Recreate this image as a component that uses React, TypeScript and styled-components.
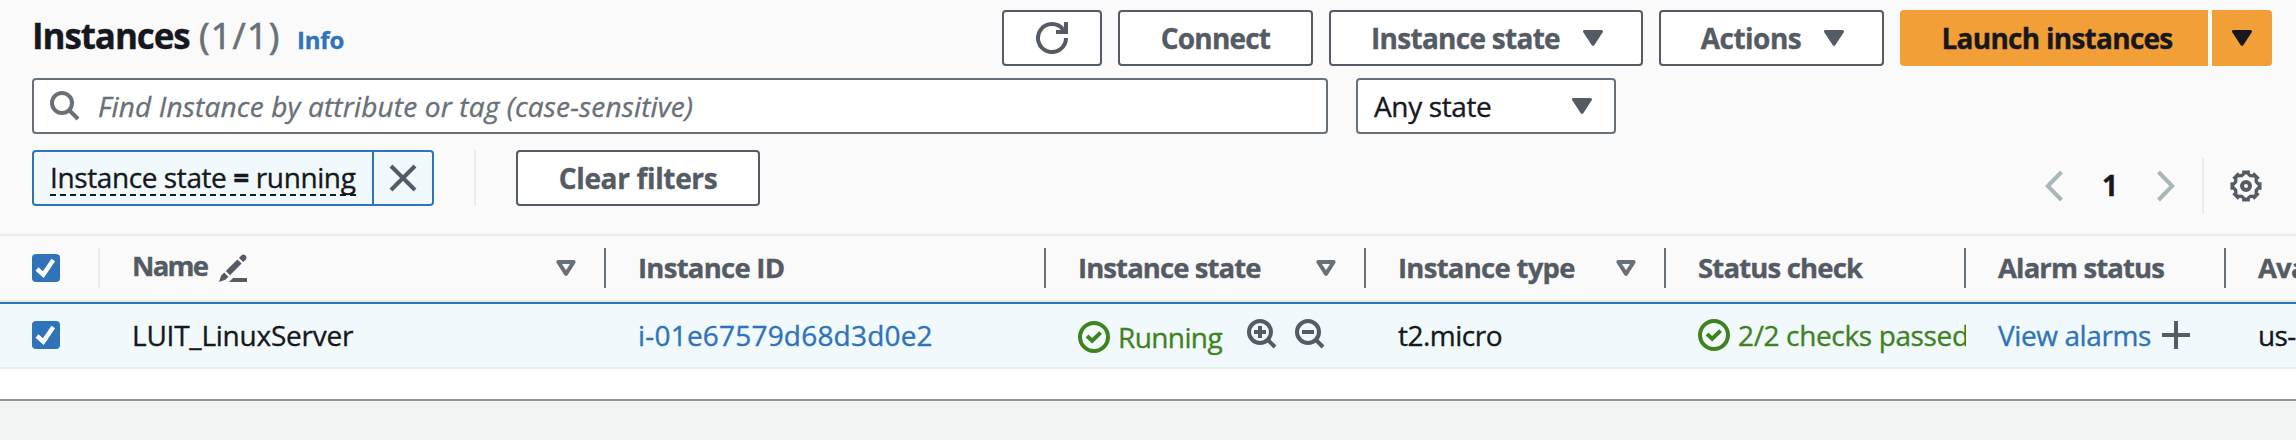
import React from 'react';
import styled, { createGlobalStyle, ThemeProvider } from 'styled-components';

const theme = {
  blue: '#2f73b9',
  orange: '#f29f38',
  green: '#3f831e',
  ink: '#16181e',
  slate: '#545b64',
  grey: '#687078',
  line: '#eaeded',
  header: '#fafafa',
  selected: '#f1f9fd',
};

const GlobalStyle = createGlobalStyle`
  * { box-sizing: border-box; }
  body {
    margin: 0;
    background: #f2f3f3;
    font-family: 'Open Sans', 'Noto Sans', sans-serif;
    font-size: 28px;
    line-height: 36px;
    color: ${theme.ink};
    -webkit-text-stroke: 0.35px currentColor;
  }
  svg { display: block; flex: none; }
`;

const Panel = styled.main`
  width: 2296px;
  height: 401px;
  background: #fff;
  border-bottom: 2px solid #90979b;
  box-shadow: 0 1px 0 #d3d6d7;
`;

const PanelHeader = styled.header`
  height: 236px;
  padding: 10px 24px 0 32px;
  background: ${theme.header};
  border-bottom: 2px solid ${theme.line};
`;

const TitleBar = styled.div`
  display: flex;
  justify-content: space-between;
  height: 56px;
`;

const Heading = styled.div`
  display: flex;
  align-items: baseline;
  white-space: nowrap;
  padding-top: 4px;
`;

const Title = styled.h1`
  margin: 0;
  width: 167px;
  font-size: 35px;
  line-height: 44px;
  font-weight: 700;
  letter-spacing: -1.08px;
`;

const Count = styled.span`
  width: 98px;
  font-size: 36px;
  letter-spacing: 1.2px;
  color: ${theme.grey};
  -webkit-text-stroke: 0.7px currentColor;
`;

const InfoLink = styled.a`
  font-size: 24px;
  font-weight: 700;
  letter-spacing: -0.2px;
  color: ${theme.blue};
`;

const Actions = styled.div`
  display: flex;
  gap: 16px;
`;

const Button = styled.button<{ $width: number; $spacing?: number; $gap?: number }>`
  display: flex;
  align-items: center;
  justify-content: center;
  gap: ${(p) => p.$gap ?? 0}px;
  width: ${(p) => p.$width}px;
  height: 56px;
  padding: 0 0 1px;
  border: 2px solid ${theme.slate};
  border-radius: 4px;
  background: #fff;
  color: ${theme.slate};
  font: 700 28px/36px 'Open Sans', sans-serif;
  letter-spacing: ${(p) => p.$spacing ?? 0}px;
  white-space: nowrap;
`;

const MenuButton = styled(Button)`
  padding-left: 2px;
`;

const SplitButton = styled.div`
  display: flex;
  gap: 4px;
`;

const PrimaryButton = styled(Button)<{ $side: 'left' | 'right' }>`
  padding-left: ${(p) => (p.$side === 'left' ? 6 : 0)}px;
  border-color: ${theme.orange};
  border-radius: ${(p) => (p.$side === 'left' ? '4px 0 0 4px' : '0 4px 4px 0')};
  background: ${theme.orange};
  color: ${theme.ink};
`;

const SearchRow = styled.div`
  display: flex;
  gap: 28px;
  margin-top: 12px;
`;

const SearchBox = styled.div`
  display: flex;
  align-items: center;
  gap: 18px;
  width: 1296px;
  height: 56px;
  padding-left: 16px;
  border: 2px solid ${theme.grey};
  border-radius: 4px;
  background: #fff;
  color: ${theme.grey};
`;

const Placeholder = styled.span`
  font-style: italic;
  letter-spacing: 0.16px;
`;

const Select = styled(SearchBox)`
  justify-content: space-between;
  width: 260px;
  padding: 0 22px 0 16px;
  color: ${theme.ink};
  letter-spacing: -0.37px;
  & > svg { color: ${theme.slate}; }
`;

const FilterRow = styled.div`
  display: flex;
  margin-top: 16px;
`;

const Token = styled.div`
  display: flex;
  width: 402px;
  height: 56px;
  border: 2px solid ${theme.blue};
  border-radius: 4px;
  background: ${theme.selected};
`;

const TokenLabel = styled.div`
  width: 338px;
  padding: 9px 0 0 16px;
`;

const TokenText = styled.span`
  display: block;
  width: 306px;
  height: 35px;
  border-bottom: 2px dashed ${theme.ink};
  line-height: 33px;
  letter-spacing: -0.4px;
  white-space: nowrap;
`;

const TokenDismiss = styled.div`
  display: flex;
  flex: 1;
  align-items: center;
  justify-content: center;
  border-left: 2px solid ${theme.blue};
  color: ${theme.slate};
`;

const FilterDivider = styled.i`
  width: 2px;
  height: 56px;
  margin: 0 40px;
  background: ${theme.line};
`;

const Pagination = styled.nav`
  display: flex;
  align-items: center;
  height: 56px;
  margin: 8px 10px 0 auto;
  color: #aab7b8;
`;

const PageNumber = styled.b`
  width: 94px;
  padding-bottom: 2px;
  text-align: center;
  color: ${theme.ink};
`;

const PagerDivider = styled.i`
  width: 2px;
  height: 56px;
  margin: 0 26px 0 27px;
  background: ${theme.line};
`;

const Row = styled.div`
  display: grid;
  grid-template-columns: 100px 506px 440px 320px 300px 300px 260px 320px;
  width: 2296px;
  overflow: hidden;
  white-space: nowrap;
`;

const HeadRow = styled(Row)`
  height: 66px;
  background: ${theme.header};
  border-bottom: 2px solid ${theme.line};
`;

const HeadCell = styled.div<{ $spacing?: number; $light?: boolean }>`
  display: flex;
  align-items: center;
  align-self: center;
  height: 40px;
  padding: 0 28px 1px 32px;
  border-right: 2px solid ${(p) => (p.$light ? theme.line : theme.grey)};
  font-weight: 700;
  font-size: 27.5px;
  letter-spacing: ${(p) => p.$spacing ?? 0}px;
  color: ${theme.slate};
  & > svg:last-child { margin-left: auto; }
`;

const NameLabel = styled.span`
  display: flex;
  align-items: center;
  gap: 12px;
  padding-bottom: 3px;
  & > svg { margin-top: 4px; }
`;

const BodyRow = styled(Row)`
  height: 67px;
  border-top: 2px solid ${theme.blue};
  border-bottom: 2px solid ${theme.line};
  background: ${theme.selected};
`;

const Cell = styled.div<{ $spacing?: number }>`
  display: flex;
  align-items: center;
  height: 61px;
  padding-left: 32px;
  overflow: hidden;
  letter-spacing: ${(p) => p.$spacing ?? 0}px;
`;

const Status = styled.span<{ $lowered?: boolean }>`
  display: flex;
  align-items: center;
  gap: 8px;
  padding-top: ${(p) => (p.$lowered ? 4 : 0)}px;
  color: ${theme.green};
`;

const ZoomActions = styled.span`
  display: flex;
  gap: 18px;
  margin: 0 0 2px 25px;
  color: ${theme.slate};
`;

const Link = styled.a`
  color: ${theme.blue};
`;

const AddAlarm = styled.span`
  margin: 0 0 0 11px;
  color: ${theme.slate};
`;

const CheckTile = styled.span`
  width: 28px;
  height: 28px;
  border-radius: 4px;
  background: ${theme.blue};
`;

const SelectHead = styled(HeadCell)`
  padding: 0 0 0 32px;
`;

const Checkbox = () => (
  <CheckTile>
    <svg width="28" height="28" fill="none" stroke="#fff" strokeWidth="4.4">
      <path d="M5 15 11.3 20.6 21.3 6" />
    </svg>
  </CheckTile>
);

const Caret = () => (
  <svg width="20" height="16" fill="currentColor" stroke="currentColor" strokeWidth="3" strokeLinejoin="round">
    <path d="M1.5 1.5h17L10 14.3z" />
  </svg>
);

const SortIcon = () => (
  <svg width="20" height="16" fill="none" stroke={theme.grey} strokeWidth="4" strokeLinejoin="round">
    <path d="M2.4 2h15.2L10 13.8z" />
  </svg>
);

const RefreshIcon = () => (
  <svg width="32" height="32" fill="none" stroke="currentColor" strokeWidth="4">
    <path d="M30 16A14 14 0 1 1 27.2 7.6L29 10" />
    <path d="M20 10h10V0" />
  </svg>
);

const SearchIcon = ({ sign }: { sign?: 'plus' | 'minus' }) => (
  <svg width="30" height="30" fill="none" stroke="currentColor" strokeWidth="4">
    <circle cx={sign ? 13 : 12} cy={sign ? 13 : 12} r={sign ? 11 : 10} />
    <path d={sign ? 'M20.5 20.5 28 28' : 'M19 19 28 28'} />
    {sign && <path d="M7 13h12" />}
    {sign === 'plus' && <path d="M13 7v12" />}
  </svg>
);

const CloseIcon = () => (
  <svg width="28" height="28" fill="none" stroke="currentColor" strokeWidth="4">
    <path d="M2 2 26 26M26 2 2 26" />
  </svg>
);

const Chevron = ({ forward }: { forward?: boolean }) => (
  <svg width="18" height="32" fill="none" stroke="currentColor" strokeWidth="4">
    <path d={forward ? 'M1.5 2 15.2 16 1.5 30' : 'M16.5 2 2.8 16 16.5 30'} />
  </svg>
);

const polar = (r: number, deg: number) =>
  `${(16 + r * Math.sin((deg * Math.PI) / 180)).toFixed(2)} ${(16 - r * Math.cos((deg * Math.PI) / 180)).toFixed(2)}`;

const gearTeeth = Array.from({ length: 8 }, (_, i) => {
  const a = i * 45;
  return [polar(13.2, a - 17), polar(16, a - 14), polar(16, a + 14), polar(13.2, a + 17)].join('L');
}).join('L');

const gearInside = Array.from({ length: 8 }, (_, i) => `${polar(12, i * 45)}L${polar(9.4, i * 45 + 22.5)}`).join('L');

const GearIcon = () => (
  <svg width="32" height="32">
    <path d={`M${gearTeeth}ZM${gearInside}Z`} fill={theme.slate} fillRule="evenodd" />
    <circle cx="16" cy="16" r="4" fill="none" stroke={theme.slate} strokeWidth="4" />
  </svg>
);

const EditIcon = () => (
  <svg width="28" height="28" fill="currentColor">
    <path d="M0 28 2.2 21.5 5.2 18.6 9.4 22.8 6.5 25.8zM6.8 17 18.4 5.4 22.6 9.6 11 21.2zM20 3.8 22.6 1.2a3 3 0 0 1 4.2 4.2L24.2 8z" />
    <path d="M14 24h14v4H10z" />
  </svg>
);

const CheckCircle = () => (
  <svg width="32" height="32" fill="none" stroke="currentColor" strokeWidth="4">
    <circle cx="16" cy="16" r="14" />
    <path d="M9 15 14.2 19.8 22.6 11.6" />
  </svg>
);

const PlusIcon = () => (
  <svg width="28" height="28" fill="none" stroke="currentColor" strokeWidth="4">
    <path d="M14 0v28M0 14h28" />
  </svg>
);

export default function App() {
  return (
    <ThemeProvider theme={theme}>
      <GlobalStyle />
      <Panel>
        <PanelHeader>
          <TitleBar>
            <Heading>
              <Title>Instances</Title>
              <Count>(1/1)</Count>
              <InfoLink>Info</InfoLink>
            </Heading>
            <Actions>
              <Button $width={100}><RefreshIcon /></Button>
              <Button $width={195} $spacing={-0.8}>Connect</Button>
              <MenuButton $width={314} $spacing={-0.72} $gap={23}>Instance state <Caret /></MenuButton>
              <MenuButton $width={225} $spacing={-0.53} $gap={23}>Actions <Caret /></MenuButton>
              <SplitButton>
                <PrimaryButton $width={308} $spacing={-0.73} $side="left">Launch instances</PrimaryButton>
                <PrimaryButton $width={60} $side="right"><Caret /></PrimaryButton>
              </SplitButton>
            </Actions>
          </TitleBar>
          <SearchRow>
            <SearchBox>
              <SearchIcon />
              <Placeholder>Find Instance by attribute or tag (case-sensitive)</Placeholder>
            </SearchBox>
            <Select>Any state <Caret /></Select>
          </SearchRow>
          <FilterRow>
            <Token>
              <TokenLabel><TokenText>Instance state <b>=</b> running</TokenText></TokenLabel>
              <TokenDismiss><CloseIcon /></TokenDismiss>
            </Token>
            <FilterDivider />
            <Button $width={244} $spacing={-0.35}>Clear filters</Button>
            <Pagination>
              <Chevron />
              <PageNumber>1</PageNumber>
              <Chevron forward />
              <PagerDivider />
              <GearIcon />
            </Pagination>
          </FilterRow>
        </PanelHeader>
        <HeadRow>
          <SelectHead $light><Checkbox /></SelectHead>
          <HeadCell $spacing={-1.7}><NameLabel>Name <EditIcon /></NameLabel><SortIcon /></HeadCell>
          <HeadCell $spacing={-0.74}>Instance ID</HeadCell>
          <HeadCell $spacing={-0.91}>Instance state <SortIcon /></HeadCell>
          <HeadCell $spacing={-0.73}>Instance type <SortIcon /></HeadCell>
          <HeadCell $spacing={-0.82}>Status check</HeadCell>
          <HeadCell $spacing={-0.87}>Alarm status</HeadCell>
          <HeadCell $spacing={-0.87}>Availability Zone</HeadCell>
        </HeadRow>
        <BodyRow>
          <Cell><Checkbox /></Cell>
          <Cell $spacing={-0.23}>LUIT_LinuxServer</Cell>
          <Cell $spacing={0.2}><Link>i-01e67579d68d3d0e2</Link></Cell>
          <Cell $spacing={-0.6}>
            <Status $lowered><CheckCircle />Running</Status>
            <ZoomActions><SearchIcon sign="plus" /><SearchIcon sign="minus" /></ZoomActions>
          </Cell>
          <Cell $spacing={-0.5}>t2.micro</Cell>
          <Cell $spacing={-0.36}><Status><CheckCircle />2/2 checks passed</Status></Cell>
          <Cell $spacing={-0.4}><Link>View alarms</Link><AddAlarm><PlusIcon /></AddAlarm></Cell>
          <Cell $spacing={-0.6}>us-east-1</Cell>
        </BodyRow>
      </Panel>
    </ThemeProvider>
  );
}
